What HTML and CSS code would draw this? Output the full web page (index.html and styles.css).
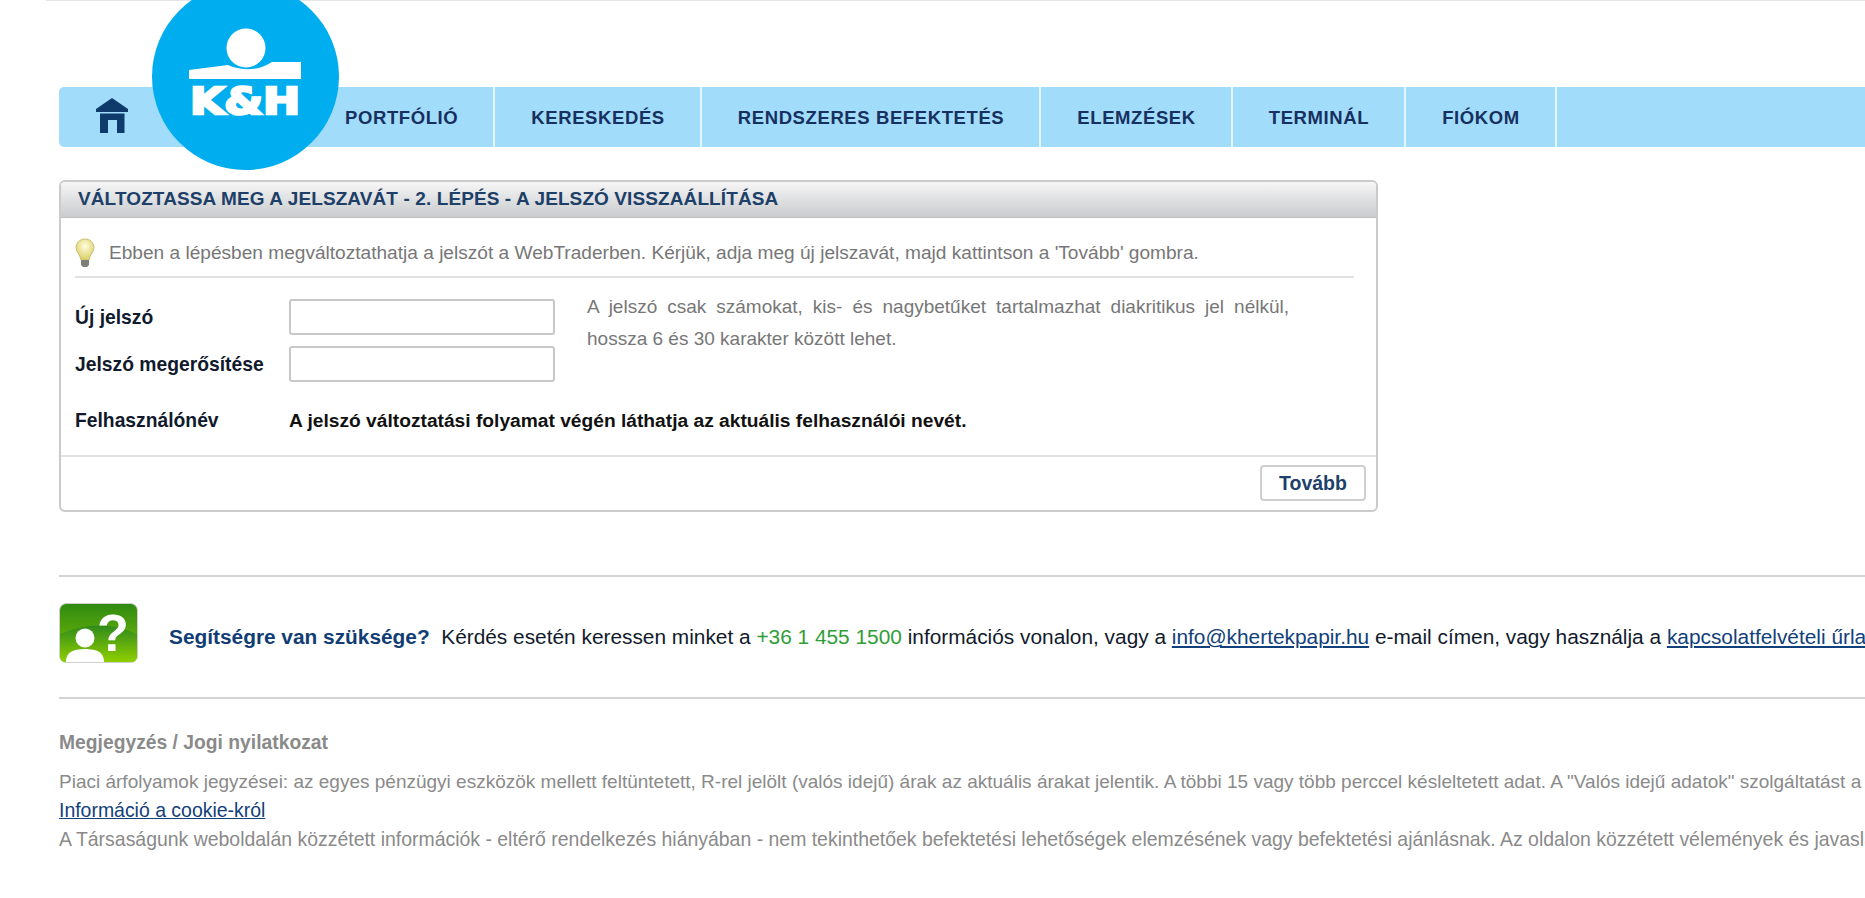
FILE: index.html
```html
<!DOCTYPE html>
<html lang="hu">
<head>
<meta charset="utf-8">
<title>K&amp;H WebTrader</title>
<link rel="stylesheet" href="styles.css">
</head>
<body>
<div class="page">
  <header class="top">
    <nav class="nav">
      <a class="nav-home" href="#" aria-label="Főoldal">
        <svg class="home-icon" viewBox="0 0 32 35" width="32" height="35"><path d="M16 0 L32 11 V14 H0 V11 Z M4 15.500 H28.500 V35 H21 V22 H12 V35 H4 Z" fill="#0f3a6c"/></svg>
      </a>
      <a class="nav-item" href="#">PORTFÓLIÓ</a>
      <a class="nav-item" href="#">KERESKEDÉS</a>
      <a class="nav-item" href="#">RENDSZERES BEFEKTETÉS</a>
      <a class="nav-item" href="#">ELEMZÉSEK</a>
      <a class="nav-item" href="#">TERMINÁL</a>
      <a class="nav-item" href="#">FIÓKOM</a>
      <svg class="logo" viewBox="0 0 187 187" width="187" height="187">
        <circle cx="93.5" cy="93.5" r="93.5" fill="#00aeef"/>
        <circle cx="94" cy="65" r="19.5" fill="#fff"/>
        <path d="M37 87 L76 82 C84 86 104 90 120 79 H149 V96 H37 Z" fill="#fff"/>
        <text class="logo-text" x="93" y="131" text-anchor="middle" textLength="110" lengthAdjust="spacingAndGlyphs">K&amp;H</text>
      </svg>
    </nav>
  </header>

  <section class="panel">
    <h2 class="panel-title">VÁLTOZTASSA MEG A JELSZAVÁT - 2. LÉPÉS - A JELSZÓ VISSZAÁLLÍTÁSA</h2>
    <div class="panel-body">
      <div class="hint">
        <svg class="bulb" viewBox="0 0 20 30" width="20" height="30">
          <defs><radialGradient id="bulbFill" cx="50%" cy="35%" r="60%"><stop offset="0" stop-color="#fffde0"/><stop offset="1" stop-color="#dcd26a"/></radialGradient></defs>
          <path d="M10 1 C4.500 1 1 5 1 9.500 C1 14 5 16 6 22 H14 C15 16 19 14 19 9.500 C19 5 15.500 1 10 1 Z" fill="url(#bulbFill)" stroke="#c9bd72" stroke-width="1"/>
          <path d="M6 22 H14 V27 L12 29 H8 L6 27 Z" fill="#7d7f78"/>
        </svg>
        <span>Ebben a lépésben megváltoztathatja a jelszót a WebTraderben. Kérjük, adja meg új jelszavát, majd kattintson a 'Tovább' gombra.</span>
      </div>
      <form class="form">
        <div class="fields">
          <label class="label" for="p1">Új jelszó</label>
          <input class="input" id="p1" type="password">
          <label class="label" for="p2">Jelszó megerősítése</label>
          <input class="input" id="p2" type="password">
        </div>
        <p class="rule">A jelszó csak számokat, kis- és nagybetűket tartalmazhat diakritikus jel nélkül, hossza 6 és 30 karakter között lehet.</p>
      </form>
      <div class="user-row">
        <span class="label">Felhasználónév</span>
        <span class="user-note">A jelszó változtatási folyamat végén láthatja az aktuális felhasználói nevét.</span>
      </div>
    </div>
    <div class="panel-foot">
      <button class="btn" type="button">Tovább</button>
    </div>
  </section>

  <section class="help">
    <svg class="help-icon" viewBox="0 0 79 60" width="79" height="60">
      <defs>
        <linearGradient id="gTop" x1="0" y1="0" x2="0" y2="1"><stop offset="0" stop-color="#2f8a12"/><stop offset="1" stop-color="#7fc400"/></linearGradient>
        <linearGradient id="gBot" x1="0" y1="0" x2="0" y2="1"><stop offset="0" stop-color="#2f8a1c"/><stop offset="1" stop-color="#8fcf00"/></linearGradient>
      </defs>
      <rect x="0.500" y="0.500" width="78" height="59" rx="7" fill="url(#gTop)" stroke="#d0d0d0"/>
      <path d="M1 31 Q40 14 78 31 V53 Q78 59 72 59 H7 Q1 59 1 53 Z" fill="url(#gBot)"/>
      <circle cx="26" cy="35" r="9.500" fill="#fff"/>
      <path d="M7 59 C7 49 14 46 26 46 C38 46 45 49 45 59 Z" fill="#fff"/>
      <text class="help-q" x="54" y="48" text-anchor="middle">?</text>
    </svg>
    <p class="help-text"><strong class="help-strong">Segítségre van szüksége?</strong>&nbsp; Kérdés esetén keressen minket a <span class="phone">+36 1 455 1500</span> információs vonalon, vagy a <a class="link" href="#">info@khertekpapir.hu</a> e-mail címen, vagy használja a <a class="link" href="#">kapcsolatfelvételi űrlapot.</a></p>
  </section>

  <footer class="legal">
    <h3 class="legal-title">Megjegyzés / Jogi nyilatkozat</h3>
    <p class="legal-line">Piaci árfolyamok jegyzései: az egyes pénzügyi eszközök mellett feltüntetett, R-rel jelölt (valós idejű) árak az aktuális árakat jelentik. A többi 15 vagy több perccel késleltetett adat. A "Valós idejű adatok" szolgáltatást a</p>
    <p class="legal-line legal-wide"><a class="link" href="#">Információ a cookie-król</a></p>
    <p class="legal-line legal-wide">A Társaságunk weboldalán közzétett információk - eltérő rendelkezés hiányában - nem tekinthetőek befektetési lehetőségek elemzésének vagy befektetési ajánlásnak. Az oldalon közzétett vélemények és javaslatok</p>
  </footer>
</div>
</body>
</html>
```
FILE: styles.css
```css
* { box-sizing: border-box; }
html, body { margin: 0; height: 100%; overflow: hidden; background: #fff; }
body { font-family: "Liberation Sans", Arial, sans-serif; color: #111; }
.page { width: 1865px; height: 898px; overflow: hidden; padding: 87px 0 0 59px; position: relative; }
.page::before { content: ""; position: absolute; left: 46px; right: 0; top: 0; height: 1px; background: #e6e6e6; }

.nav { position: relative; display: flex; height: 60px; width: 1806px; background: #a2dcfb; border-radius: 5px 0 0 5px; }
.nav-home { width: 250px; flex: none; padding: 11px 0 0 37px; }
.home-icon { display: block; }
.nav-item { display: flex; align-items: center; padding: 1px 35px 0 36px; height: 60px; border-right: 2px solid #e4f5fe; font-size: 18.500px; font-weight: bold; letter-spacing: .6px; color: #16305f; text-decoration: none; white-space: nowrap; }
.logo { position: absolute; left: 93px; top: -104px; }
.logo-text { font-family: "DejaVu Sans", sans-serif; font-weight: bold; font-size: 37px; fill: #fff; stroke: #fff; stroke-width: 2.500px; }

.panel { width: 1319px; margin-top: 33px; border: 2px solid #cbcbcb; border-radius: 6px; height: 332px; display: flex; flex-direction: column; }
.panel-title { margin: 0; height: 36px; flex: none; padding: 0 0 0 17px; line-height: 33px; font-size: 19px; letter-spacing: .1px; font-weight: bold; color: #1d3f68; background: linear-gradient(#f6f6f6, #c9cbce); border-bottom: 1px solid #c0c0c0; border-radius: 4px 4px 0 0; white-space: nowrap; }
.panel-body { flex: 1; padding: 0 22px 0 14px; }
.hint { display: flex; align-items: center; gap: 14px; height: 60px; border-bottom: 2px solid #e2e2e2; padding-top: 12px; font-size: 19.100px; color: #777; white-space: nowrap; }
.bulb { flex: none; }

.form { display: flex; padding-top: 21px; }
.fields { display: grid; grid-template-columns: 214px 266px; row-gap: 11px; align-items: center; }
.label { font-size: 19.300px; font-weight: bold; color: #111a2c; white-space: nowrap; padding-top: 2px; }
.input { width: 266px; height: 36px; border: 2px solid #c8c8c8; border-radius: 3px; background: #fff; padding: 0; }
.rule { width: 702px; margin: -8px 0 0 32px; font-size: 19px; line-height: 32px; color: #777; text-align: justify; }

.user-row { display: grid; grid-template-columns: 214px auto; margin-top: 26px; align-items: center; }
.user-note { font-size: 19.200px; font-weight: bold; color: #111; white-space: nowrap; padding-top: 2px; }

.panel-foot { height: 55px; flex: none; border-top: 2px solid #e2e2e2; display: flex; justify-content: flex-end; padding: 8px 10px 0 0; }
.btn { width: 106px; height: 36px; background: #fff; border: 2px solid #cfcfcf; border-radius: 4px; font-family: inherit; font-size: 19.500px; font-weight: bold; color: #1d4168; padding: 0; }

.help { width: 1806px; margin-top: 63px; height: 124px; border-top: 2px solid #d4d4d4; border-bottom: 2px solid #d4d4d4; display: flex; align-items: center; gap: 31px; white-space: nowrap; }
.help-icon { flex: none; margin-top: -8px; }
.help-q { font-family: "Liberation Sans", sans-serif; font-weight: bold; font-size: 52px; fill: #fff; }
.help-text { margin: 0; font-size: 20.850px; color: #111a2c; }
.help-strong { color: #113d74; }
.phone { color: #2f9e38; }
.link { color: #12407a; text-decoration: underline; }

.legal { padding-top: 34px; white-space: nowrap; color: #8a8a8a; font-size: 19px; }
.legal-title { margin: 0 0 14px; font-size: 19.300px; line-height: 20px; font-weight: bold; color: #8a8a8a; }
.legal-line { margin: 0; line-height: 29px; }
.legal-wide { font-size: 19.450px; }
```
